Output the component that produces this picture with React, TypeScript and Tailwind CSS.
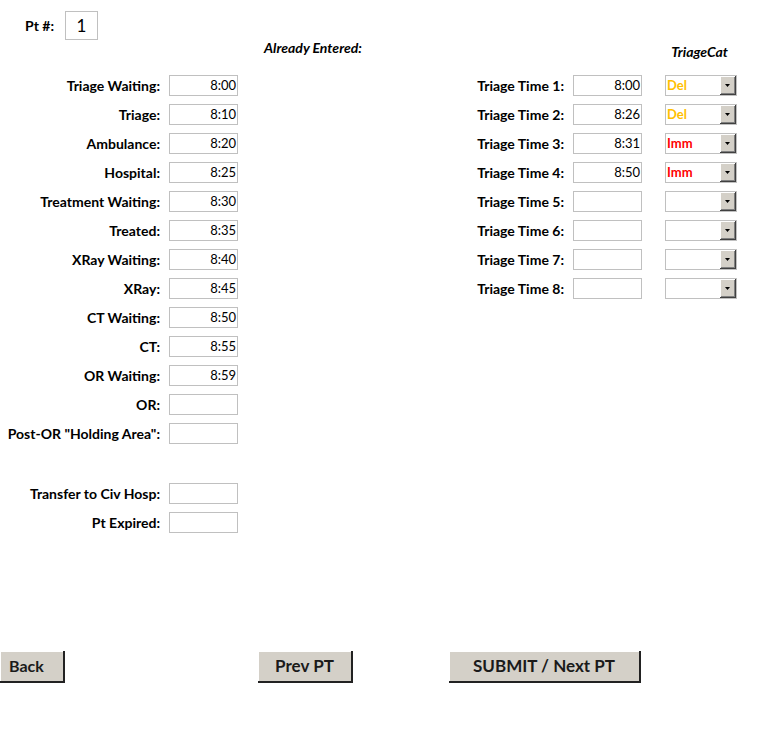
const leftRows: { label: string; value: string; spaceBefore?: boolean }[] = [
  { label: 'Triage Waiting:', value: '8:00' },
  { label: 'Triage:', value: '8:10' },
  { label: 'Ambulance:', value: '8:20' },
  { label: 'Hospital:', value: '8:25' },
  { label: 'Treatment Waiting:', value: '8:30' },
  { label: 'Treated:', value: '8:35' },
  { label: 'XRay Waiting:', value: '8:40' },
  { label: 'XRay:', value: '8:45' },
  { label: 'CT Waiting:', value: '8:50' },
  { label: 'CT:', value: '8:55' },
  { label: 'OR Waiting:', value: '8:59' },
  { label: 'OR:', value: '' },
  { label: 'Post-OR "Holding Area":', value: '' },
  { label: 'Transfer to Civ Hosp:', value: '', spaceBefore: true },
  { label: 'Pt Expired:', value: '' },
];

const triage: { time: string; cat: string }[] = [
  { time: '8:00', cat: 'Del' },
  { time: '8:26', cat: 'Del' },
  { time: '8:31', cat: 'Imm' },
  { time: '8:50', cat: 'Imm' },
  { time: '', cat: '' },
  { time: '', cat: '' },
  { time: '', cat: '' },
  { time: '', cat: '' },
];

function TimeBox({ value }: { value: string }) {
  return (
    <div className="w-[69px] h-[21px] border border-[#c0c0c0] bg-white flex items-center justify-end pr-[1px] text-[13px] font-normal text-black leading-none">
      {value}
    </div>
  );
}

function CatSelect({ value }: { value: string }) {
  const color = value === 'Del' ? 'text-[#ffc000]' : 'text-[#ff0000]';
  return (
    <div className="w-[72px] h-[21px] border border-[#c0c0c0] bg-white flex items-stretch">
      <div className={`flex-1 flex items-center pl-[1px] text-[13px] font-bold leading-none ${color}`}>{value}</div>
      <div className="w-[16px] bg-[#d4d0c8] border-r border-b border-[#404040] shadow-[inset_1px_1px_0_#ffffff,inset_-1px_-1px_0_#808080] flex items-center justify-center">
        <svg width="5" height="3" viewBox="0 0 5 3">
          <path d="M0 0h5L2.5 3z" fill="#000" />
        </svg>
      </div>
    </div>
  );
}

function Btn({ label, width, extra = '' }: { label: string; width: string; extra?: string }) {
  return (
    <button
      className={`${width} ${extra} h-[32px] bg-[#d4d0c8] border-r-2 border-b-2 border-[#222] shadow-[inset_1px_1px_0_#ffffff] text-[17px] font-bold text-[#1a1a1a] flex items-center justify-center`}
    >
      {label}
    </button>
  );
}

export default function App() {
  return (
    <div className="w-[762px] h-[739px] bg-white text-black flex flex-col font-['Lato','Open_Sans',sans-serif]">
      {/* Pt number */}
      <div className="flex items-center h-[29px] mt-[11px] ml-[25px] gap-[9px]">
        <span className="w-[31px] text-[14px] font-bold whitespace-nowrap">Pt #:</span>
        <div className="w-[33px] h-[29px] border border-[#c0c0c0] flex items-center justify-center text-[17px]">1</div>
      </div>

      {/* headers */}
      <div className="flex h-[35px] items-start">
        <span className="ml-[264px] mt-[-3px] text-[14px] font-bold italic">Already Entered:</span>
        <span className="ml-auto mr-[34px] mt-[1px] text-[14px] font-bold italic">TriageCat</span>
      </div>

      <div className="flex">
        {/* left column */}
        <div className="flex flex-col gap-[8px]">
          {leftRows.map((r) => (
            <div key={r.label} className={`flex items-center gap-[9px] ${r.spaceBefore ? 'mt-[31px]' : ''}`}>
              <span className="w-[160px] text-right text-[14px] font-bold whitespace-nowrap">{r.label}</span>
              <TimeBox value={r.value} />
            </div>
          ))}
        </div>

        {/* right column */}
        <div className="flex flex-col gap-[8px] ml-[232px]">
          {triage.map((t, i) => (
            <div key={i} className="flex items-center">
              <span className="w-[94px] text-right text-[14px] font-bold whitespace-nowrap">Triage Time {i + 1}:</span>
              <div className="ml-[9px]">
                <TimeBox value={t.time} />
              </div>
              <div className="ml-[23px]">
                <CatSelect value={t.cat} />
              </div>
            </div>
          ))}
        </div>
      </div>

      {/* buttons */}
      <div className="flex mt-[118px]">
        <Btn label="Back" width="w-[65px]" extra="!justify-start pl-[9px] !text-[16px]" />
        <div className="ml-[193px]">
          <Btn label="Prev PT" width="w-[95px]" />
        </div>
        <div className="ml-[96px]">
          <Btn label="SUBMIT / Next PT" width="w-[192px]" />
        </div>
      </div>
    </div>
  );
}
